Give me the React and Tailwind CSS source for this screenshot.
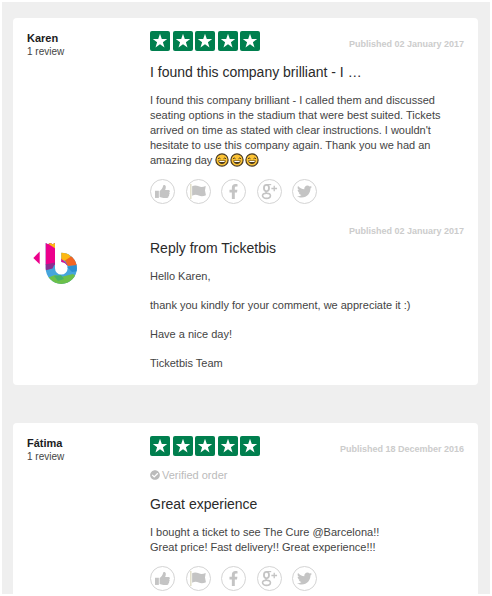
import React from 'react';
import { FaFacebookF, FaTwitter, FaCheckCircle } from 'react-icons/fa';

const ThumbIcon = ({ className }) => (
  <svg viewBox="0 0 14 14" className={className} fill="currentColor" aria-hidden="true">
    <path d="M0 6.300h3.600v6.700H0z" />
    <path d="M4.300 6.500C6 5.500 7.300 4 7.600 1.500c.1-1 2.500-.9 2.500 1.200 0 1.200-.3 2-.7 2.900h3.200c1.500 0 1.600 1.900.6 2.300.7.500.6 1.600-.2 1.900.5.600.2 1.500-.5 1.700.3.800-.2 1.500-1.200 1.500H8c-1.600 0-2.500-.5-3.700-.8z" />
  </svg>
);

const FlagIcon = ({ className }) => (
  <svg viewBox="0 0 16 16" className={className} aria-hidden="true">
    <path d="M0.800 1v14" stroke="#d6d2b4" strokeWidth="1" />
    <path fill="currentColor" d="M2 3c2.200-1 4.200-.8 6.200.1s3.800.8 6.600-.3l-.7 4.200.9 4.600c-2.600 1.100-4.800 1.100-6.800.2s-4-.9-6.200.2z" />
  </svg>
);

const GooglePlusIcon = ({ className }) => (
  <svg viewBox="0 0 18 18" className={className} fill="none" stroke="currentColor" aria-hidden="true">
    <ellipse cx="5.800" cy="5.400" rx="2.700" ry="3.400" strokeWidth="1.900" />
    <path d="M5.500 1.700h5.300" strokeWidth="1.200" />
    <path d="M6 8.600c-1.400 1.100-.8 1.900.4 2.500" strokeWidth="1.500" />
    <ellipse cx="5.800" cy="13.600" rx="4.200" ry="2.700" strokeWidth="1.700" />
    <path d="M14 2.800v6M11 5.800h6" strokeWidth="1.400" />
  </svg>
);

const ACTIONS = [
  { label: 'Useful', Icon: ThumbIcon, size: 'size-[15px]' },
  { label: 'Report', Icon: FlagIcon, size: 'size-[17px]' },
  { label: 'Share on Facebook', Icon: FaFacebookF, size: 'size-[15px]' },
  { label: 'Share on Google+', Icon: GooglePlusIcon, size: 'size-[17px]' },
  { label: 'Share on Twitter', Icon: FaTwitter, size: 'size-[15px]' },
];

const REVIEWS = [
  {
    name: 'Karen',
    count: '1 review',
    date: 'Published 02 January 2017',
    title: 'I found this company brilliant - I …',
    lines: [
      'I found this company brilliant - I called them and discussed seating options in the stadium that were best suited. Tickets arrived on time as stated with clear instructions. I wouldn\'t hesitate to use this company again. Thank you we had an amazing day ',
    ],
    smileys: 3,
    reply: {
      date: 'Published 02 January 2017',
      title: 'Reply from Ticketbis',
      paragraphs: [
        'Hello Karen,',
        'thank you kindly for your comment, we appreciate it :)',
        'Have a nice day!',
        'Ticketbis Team',
      ],
    },
  },
  {
    name: 'Fátima',
    count: '1 review',
    date: 'Published 18 December 2016',
    verified: true,
    title: 'Great experience',
    lines: [
      'I bought a ticket to see The Cure @Barcelona!!',
      'Great price! Fast delivery!! Great experience!!!',
    ],
  },
];

const Stars = () => (
  <div className="flex w-[110px] justify-between" role="img" aria-label="5 out of 5 stars">
    {[1, 2, 3, 4, 5].map((n) => (
      <svg key={n} viewBox="0 0 20 20" className="size-5 rounded-[2px] bg-[#007f4e]">
        <path fill="#fff" d="M10 2.800l1.800 5.100h5.400l-4.300 3.300 1.600 5.300-4.500-3.200-4.500 3.200 1.600-5.300-4.300-3.300h5.400z" />
      </svg>
    ))}
  </div>
);

const Smiley = () => (
  <svg viewBox="0 0 14 14" className="mr-px inline-block size-[14px] align-[-3px]" role="img" aria-label="smile">
    <circle cx="7" cy="7" r="6.100" fill="#fcc334" stroke="#4a3a20" strokeWidth="1.200" />
    <path d="M3 5.800q1.200-1.700 2.500 0M8.500 5.800q1.300-1.700 2.500 0" fill="none" stroke="#4a3a20" strokeWidth="1" />
    <path d="M3.200 7.600h7.600q-.6 3.400-3.800 3.400t-3.800-3.400z" fill="#4a3a20" />
    <path d="M4.200 8.100h5.600l-.4 1h-4.800z" fill="#fff" />
  </svg>
);

const TicketbisLogo = () => (
  <svg viewBox="0 0 44 42" className="ml-[6px] h-[42px] w-[44px]" role="img" aria-label="Ticketbis">
    <clipPath id="b-shape">
      <path d="M12.700 0l2.300 1.200L17.300 0l2.400 1.200L22 0v25.300A6.300 6.300 0 1 0 28.300 19V9.700A15.600 15.600 0 1 1 12.700 25.300z" />
    </clipPath>
    <path fill="#ec008c" d="M6.700 8.600v12.600L.3 14.900z" />
    <g clipPath="url(#b-shape)">
      <path fill="#45a5dc" d="M12 0h32v42H12z" />
      <path fill="#ec008c" d="M12 0h10.500v22H12z" />
      <path fill="#fdb813" d="M14 0h9v6z" />
      <path fill="#8a2f8f" d="M12 21.500l10.500-2-3 6L12 27.500z" />
      <path fill="#2b8fd0" d="M34 24l11-3v7l-6 1z" />
      <path fill="#fdb813" d="M28 9h6l4 5-4 4-6-1z" />
      <path fill="#ec008c" d="M28 15.500l6.500 6-3 1.500L28 20z" />
      <path fill="#f26522" d="M32 17.500l7.500-5L45 22l-10 1z" />
      <path fill="#6cc04a" d="M14 35l8-3 6 2 12-3 4 3-9 9H19z" />
      <path fill="#44b36a" d="M21 33l7-1 3 4-6 2z" />
    </g>
  </svg>
);

const Actions = () => (
  <div className="mt-[11px] flex w-[167px] justify-between">
    {ACTIONS.map(({ label, Icon, size }) => (
      <button
        key={label}
        type="button"
        aria-label={label}
        className="flex size-[25px] items-center justify-center rounded-full border border-[#d4d4d4] text-[#c4c4c4]"
      >
        <Icon className={size} />
      </button>
    ))}
  </div>
);

const Published = ({ children }) => (
  <p className="text-[9px] leading-[14px] font-bold text-[#cccccc]">{children}</p>
);

const Reply = ({ reply }) => (
  <section className="mt-5 flex">
    <div className="w-[123px] shrink-0 pt-[19px]">
      <TicketbisLogo />
    </div>
    <div className="min-w-0 flex-1">
      <div className="flex justify-end">
        <Published>{reply.date}</Published>
      </div>
      <h3 className="text-[14px] leading-5">{reply.title}</h3>
      <div className="mt-[11px] flex flex-col gap-[14px] text-[11px] leading-[15px] text-[#444]">
        {reply.paragraphs.map((p) => (
          <p key={p}>{p}</p>
        ))}
      </div>
    </div>
  </section>
);

const Review = ({ review }) => (
  <article className="rounded-[4px] bg-white px-[14px] pt-[13px] pb-[14px] last:rounded-b-none last:pb-[3px]">
    <div className="flex">
      <div className="w-[123px] shrink-0 leading-[14px]">
        <p className="text-[11px] font-bold text-[#1b1b21]">{review.name}</p>
        <p className="text-[10px] text-[#444]">{review.count}</p>
      </div>
      <div className="min-w-0 flex-1">
        <div className="flex items-end justify-between">
          <Stars />
          <Published>{review.date}</Published>
        </div>
        {review.verified && (
          <p className="mt-[11px] flex items-center gap-[2px] text-[11px] leading-4 text-[#bbb]">
            <FaCheckCircle className="size-[10px]" />
            Verified order
          </p>
        )}
        <h2 className="mt-[11px] text-[14px] leading-5">{review.title}</h2>
        <div className="mt-[11px] pr-5 text-[11px] leading-[15px] text-[#444]">
          {review.lines.map((line, i) => (
            <p key={line}>
              {line}
              {review.smileys && i === review.lines.length - 1 &&
                Array(review.smileys).fill().map((_, n) => <Smiley key={n} />)}
            </p>
          ))}
        </div>
        <Actions />
      </div>
    </div>
    {review.reply && <Reply reply={review.reply} />}
  </article>
);

const App = () => {
  return (
    <div className="px-[2px] pt-[2px] font-['Liberation_Sans',Arial,sans-serif] text-[#2a2a2a]">
      <main className="flex flex-col gap-[38px] bg-[#efefef] pt-4 pr-3 pl-[11px]">
        {REVIEWS.map((review) => (
          <Review key={review.name} review={review} />
        ))}
      </main>
    </div>
  );
};

export default App;
